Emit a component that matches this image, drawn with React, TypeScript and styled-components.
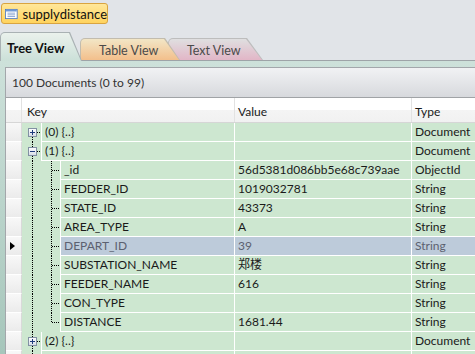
import React from "react";
import styled, { createGlobalStyle, css } from "styled-components";

type Expander = "plus" | "minus";

type Row = {
  level: number;
  key: string;
  value?: string;
  type: string;
  expander?: Expander;
  first?: boolean;
  last?: boolean;
  selected?: boolean;
};

const rows: Row[] = [
  { level: 0, key: "(0) {..}", type: "Document", expander: "plus", first: true },
  { level: 0, key: "(1) {..}", type: "Document", expander: "minus" },
  { level: 1, key: "_id", value: "56d5381d086bb5e68c739aae", type: "ObjectId" },
  { level: 1, key: "FEDDER_ID", value: "1019032781", type: "String" },
  { level: 1, key: "STATE_ID", value: "43373", type: "String" },
  { level: 1, key: "AREA_TYPE", value: "A", type: "String" },
  { level: 1, key: "DEPART_ID", value: "39", type: "String", selected: true },
  { level: 1, key: "SUBSTATION_NAME", value: "郑楼", type: "String" },
  { level: 1, key: "FEEDER_NAME", value: "616", type: "String" },
  { level: 1, key: "CON_TYPE", value: "", type: "String" },
  { level: 1, key: "DISTANCE", value: "1681.44", type: "String", last: true },
  { level: 0, key: "(2) {..}", type: "Document", expander: "plus" },
  // next row only peeks in at the bottom edge
  { level: 0, key: "", type: "" },
];

const GlobalStyle = createGlobalStyle`
  body {
    margin: 0;
    background: #e1e4e8;
    font-family: Lato, "Noto Sans CJK SC", sans-serif;
    font-size: 12px;
    color: #1a1a1a;
  }
`;

const Screen = styled.div`
  width: 475px;
  height: 354px;
  overflow: hidden;
  display: flex;
  flex-direction: column;
`;

const TopBar = styled.div`
  padding: 3px 0 0 1px;
  display: flex;
`;

const Badge = styled.div`
  width: 107px;
  height: 21px;
  box-sizing: border-box;
  border: 1px solid #d9a440;
  border-radius: 3px;
  background: linear-gradient(#ffe79a, #ffd35e);
  display: flex;
  align-items: center;
  gap: 5px;
  padding-left: 3px;
  font-size: 13px;
  color: #111;
`;

const TabStrip = styled.div`
  margin-top: 8px;
  height: 28px;
  display: flex;
  align-items: flex-end;
  position: relative;
  z-index: 2;
`;

const tabColors = {
  tree: { border: "#a9b1b3", top: "#eaf1ec", bottom: "#cbe0d8" },
  table: { border: "#c2bcae", top: "#f2e6c6", bottom: "#f3bf8b" },
  text: { border: "#bdbdbd", top: "#dfdfe0", bottom: "#e2b6c7" },
};

type TabKind = keyof typeof tabColors;

const TabOuter = styled.div<{ $kind: TabKind; $w: number; $h: number; $slant: number; $ml: number; $z: number }>`
  position: relative;
  z-index: ${(p) => p.$z};
  width: ${(p) => p.$w}px;
  height: ${(p) => p.$h}px;
  margin-left: ${(p) => p.$ml}px;
  margin-bottom: ${(p) => (p.$kind === "tree" ? -1 : 0)}px;
  background: ${(p) => tabColors[p.$kind].border};
  border-radius: 5px 0 0 0;
  clip-path: polygon(0 0, calc(100% - ${(p) => p.$slant}px) 0, 100% 100%, 0 100%);
  box-sizing: border-box;
  padding: 1px 1px 0 1px;
`;

const TabInner = styled.div<{ $kind: TabKind; $slant: number; $bold?: boolean; $pad: number }>`
  height: 100%;
  box-sizing: border-box;
  border-radius: 4px 0 0 0;
  background: linear-gradient(${(p) => tabColors[p.$kind].top}, ${(p) => tabColors[p.$kind].bottom});
  clip-path: polygon(0 0, calc(100% - ${(p) => p.$slant}px) 0, 100% 100%, 0 100%);
  padding-left: ${(p) => p.$pad}px;
  display: flex;
  align-items: center;
  padding-top: 2px;
  color: ${(p) => (p.$bold ? "#111" : "#4a4a4a")};
  font-weight: ${(p) => (p.$bold ? 700 : 400)};
  font-size: ${(p) => (p.$bold ? 13 : 12.5)}px;
`;

const Panel = styled.div`
  flex: 1;
  border-top: 1px solid #9ea4a8;
  background: linear-gradient(#cde1da, #a6c6bb);
  padding: 6px 0 0 5px;
  display: flex;
  flex-direction: column;
  min-height: 0;
`;

const Sheet = styled.div`
  flex: 1;
  border-left: 1px solid #a3a7ab;
  background: #ffffff;
  display: flex;
  flex-direction: column;
`;

const CountBar = styled.div`
  height: 29px;
  border-top: 1px solid #a3a7ab;
  border-bottom: 1px solid #a0a3a6;
  background: linear-gradient(#f1f2f4, #d7d9dd);
  display: flex;
  align-items: center;
  padding-left: 6px;
  color: #333;
  font-size: 12px;
`;

const GridRow = styled.div`
  display: grid;
  grid-template-columns: 16px 212px 177px 1fr;
`;

const HeaderRow = styled(GridRow)`
  height: 24px;
  border-bottom: 1px solid #d6d6d6;
  background: linear-gradient(#ffffff 0%, #ffffff 50%, #f4f4f4 50%, #f1f1f1 100%);
`;

const HeaderCell = styled.div<{ $sep?: boolean }>`
  display: flex;
  align-items: center;
  padding: 3px 0 0 ${(p) => (p.$sep ? 3 : 5)}px;
  border-left: ${(p) => (p.$sep ? "1px solid #e2e2e2" : "none")};
  white-space: nowrap;
`;

const HeaderCorner = styled.div`
  border-right: 1px solid #e2e2e2;
`;

const RowHead = styled.div`
  height: 18px;
  border-bottom: 1px solid #ffffff;
  border-right: 1px solid #d9d9d9;
  background: linear-gradient(#f8f8f8, #ebebeb);
  display: flex;
  align-items: center;
  padding-left: 4px;
`;

const CurrentMark = styled.span`
  width: 0;
  height: 0;
  border-top: 4.5px solid transparent;
  border-bottom: 4.5px solid transparent;
  border-left: 5px solid #000;
`;

const rowBg = (selected?: boolean) => (selected ? "#bdcbda" : "#cde7d0");

const KeyCell = styled.div`
  display: flex;
  background: #cde7d0;
  min-width: 0;
`;

const Indent = styled.div`
  display: flex;
  flex: none;
`;

type Vert = "full" | "top" | "bottom";

const Segment = styled.div<{ $v?: Vert; $h?: boolean }>`
  position: relative;
  width: 19px;
  height: 19px;

  ${(p) =>
    p.$v &&
    css`
      &::before {
        content: "";
        position: absolute;
        left: 10px;
        top: ${p.$v === "bottom" ? 9 : 0}px;
        bottom: ${p.$v === "top" ? 10 : 0}px;
        border-left: 1px dotted #000;
      }
    `}

  ${(p) =>
    p.$h &&
    css`
      &::after {
        content: "";
        position: absolute;
        left: 11px;
        right: 1px;
        top: 9px;
        border-top: 1px dotted #000;
      }
    `}
`;

const ExpanderBox = styled.svg`
  position: absolute;
  left: 6px;
  top: 5px;
  z-index: 1;
`;

const DataCell = styled.div<{ $sel?: boolean }>`
  height: 18px;
  line-height: 18px;
  border-left: 1px solid #ffffff;
  border-bottom: 1px solid #ffffff;
  background: ${(p) => rowBg(p.$sel)};
  color: ${(p) => (p.$sel ? "#5c6170" : "#1a1a1a")};
  padding-left: 3px;
  white-space: nowrap;
  overflow: hidden;
`;

const KeyText = styled(DataCell)`
  flex: 1;
`;

const TableIcon = () => (
  <svg width="15" height="12" viewBox="0 0 15 12">
    <rect x="0.5" y="0.5" width="14" height="11" fill="#ffffff" stroke="#4a78c2" />
    <rect x="1" y="1" width="13" height="2" fill="#6f98d6" />
    <line x1="3" y1="5" x2="12" y2="5" stroke="#7d9ccf" />
    <line x1="3" y1="7" x2="12" y2="7" stroke="#7d9ccf" />
    <line x1="3" y1="9" x2="12" y2="9" stroke="#7d9ccf" />
  </svg>
);

const Expand = ({ kind }: { kind: Expander }) => (
  <ExpanderBox width="9" height="9" viewBox="0 0 9 9">
    <defs>
      <linearGradient id={`exp-${kind}`} x1="0" y1="0" x2="0" y2="1">
        <stop offset="0" stopColor="#ffffff" />
        <stop offset="1" stopColor="#d6dce6" />
      </linearGradient>
    </defs>
    <rect x="0.5" y="0.5" width="8" height="8" fill={`url(#exp-${kind})`} stroke="#8190a3" />
    <line x1="2" y1="4.5" x2="7" y2="4.5" stroke="#1d3a7c" />
    {kind === "plus" && <line x1="4.5" y1="2" x2="4.5" y2="7" stroke="#1d3a7c" />}
  </ExpanderBox>
);

const TreeIndent = ({ row }: { row: Row }) => {
  if (row.level === 0) {
    return (
      <Indent>
        <Segment $v={row.first ? "bottom" : "full"} $h={!!row.expander}>
          {row.expander && <Expand kind={row.expander} />}
        </Segment>
      </Indent>
    );
  }
  return (
    <Indent>
      <Segment $v="full" />
      <Segment $v={row.last ? "top" : "full"} $h />
    </Indent>
  );
};

type TabProps = {
  kind: TabKind;
  label: string;
  w: number;
  h: number;
  slant: number;
  ml: number;
  z: number;
  pad: number;
  bold?: boolean;
};

const Tab = ({ kind, label, w, h, slant, ml, z, pad, bold }: TabProps) => (
  <TabOuter $kind={kind} $w={w} $h={h} $slant={slant} $ml={ml} $z={z}>
    <TabInner $kind={kind} $slant={slant} $bold={bold} $pad={pad}>
      {label}
    </TabInner>
  </TabOuter>
);

const App = () => {
  return (
    <Screen>
      <GlobalStyle />
      <TopBar>
        <Badge>
          <TableIcon />
          supplydistance
        </Badge>
      </TopBar>
      <TabStrip>
        <Tab kind="tree" label="Tree View" w={82} h={29} slant={12} ml={0} z={3} pad={6} bold />
        <Tab kind="table" label="Table View" w={100} h={22} slant={15} ml={-2} z={2} pad={18} />
        <Tab kind="text" label="Text View" w={95} h={22} slant={16} ml={-12} z={1} pad={18} />
      </TabStrip>
      <Panel>
        <Sheet>
          <CountBar>100 Documents (0 to 99)</CountBar>
          <HeaderRow>
            <HeaderCorner />
            <HeaderCell>Key</HeaderCell>
            <HeaderCell $sep>Value</HeaderCell>
            <HeaderCell $sep>Type</HeaderCell>
          </HeaderRow>
          {rows.map((row, i) => (
            <GridRow key={i}>
              <RowHead>{row.selected && <CurrentMark />}</RowHead>
              <KeyCell>
                <TreeIndent row={row} />
                <KeyText $sel={row.selected}>{row.key}</KeyText>
              </KeyCell>
              <DataCell $sel={row.selected}>{row.value}</DataCell>
              <DataCell $sel={row.selected}>{row.type}</DataCell>
            </GridRow>
          ))}
        </Sheet>
      </Panel>
    </Screen>
  );
};

export default App;
